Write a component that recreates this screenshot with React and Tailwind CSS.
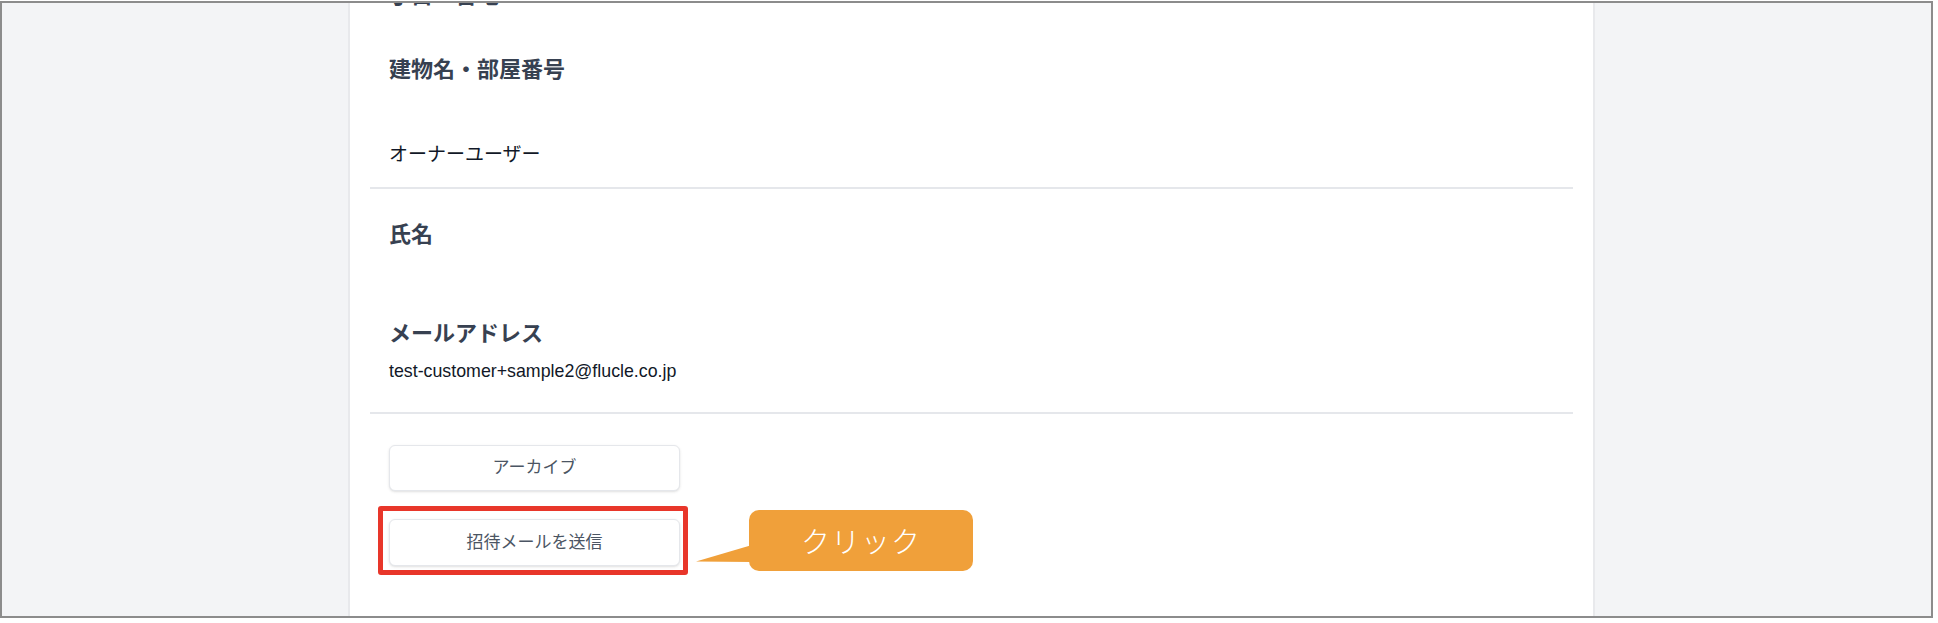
export default function App() {
  const font = { fontFamily: '"Liberation Sans", "Noto Sans CJK JP", sans-serif' };
  return (
    <div className="relative w-[1938px] h-[623px] bg-white overflow-hidden" style={font}>
      <div className="mt-[1px] w-[1933px] h-[617px] border-2 border-[#8c8c8c] flex overflow-hidden">
        <div className="w-[348px] h-full bg-[#f3f4f6] border-r-2 border-[#e8e9ec]" />
        <div className="w-[1243px] h-full bg-white px-[20px] flex flex-col overflow-hidden">
          <div className="px-[19px] -mt-[22px] h-[30px] leading-[30px] text-[22px] font-bold text-[#374151]">丁目・番地</div>
          <div className="px-[19px] mt-[44px] h-[30px] leading-[30px] text-[22px] font-bold text-[#374151]">建物名・部屋番号</div>
          <div className="px-[19px] mt-[56px] h-[28px] leading-[28px] text-[19px] text-[#111827]">オーナーユーザー</div>
          <div className="mt-[18px] h-[2px] bg-[#e5e7eb]" />
          <div className="px-[19px] mt-[31px] h-[30px] leading-[30px] text-[22px] font-bold text-[#374151]">氏名</div>
          <div className="px-[19px] mt-[69px] h-[30px] leading-[30px] text-[22px] font-bold text-[#374151]">メールアドレス</div>
          <div className="px-[19px] mt-[10px] h-[24px] leading-[24px] text-[17.8px] text-[#111827]">test-customer+sample2@flucle.co.jp</div>
          <div className="mt-[29px] h-[2px] bg-[#e5e7eb]" />
          <div className="px-[19px] mt-[31px] flex flex-col gap-[28px]">
            <button className="w-[291px] h-[46px] rounded-md border border-[#e5e7eb] bg-white shadow-sm text-[17px] text-[#4b5563]">アーカイブ</button>
            <button className="w-[291px] h-[47px] rounded-md border border-[#e5e7eb] bg-white shadow-sm text-[17px] text-[#4b5563]">招待メールを送信</button>
          </div>
        </div>
        <div className="flex-1 h-full bg-[#f3f4f6] border-l-2 border-[#e8e9ec]" />
      </div>

      {/* annotation: red highlight box */}
      <div className="absolute left-[378px] top-[506px] w-[310px] h-[69px] border-[5px] border-[#e8362a] rounded-[3px]" />

      {/* annotation: callout */}
      <svg className="absolute left-[694px] top-[540px]" width="60" height="26" viewBox="0 0 60 26">
        <polygon points="2,21.5 58,5 58,22" fill="#f0a03a" />
      </svg>
      <div className="absolute left-[749px] top-[510px] w-[224px] h-[61px] rounded-[10px] bg-[#f0a03a] flex items-center justify-center">
        <span className="text-[29px] leading-none text-white tracking-[1px]" style={{ fontFamily: '"Noto Sans CJK JP", sans-serif', fontWeight: 300 }}>クリック</span>
      </div>
    </div>
  );
}
